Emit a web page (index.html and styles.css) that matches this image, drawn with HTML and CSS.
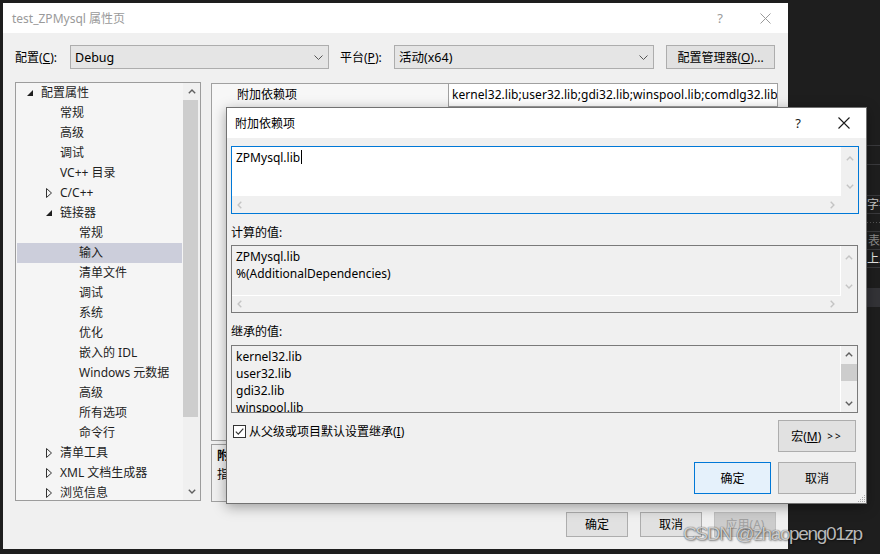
FILE: index.html
```html
<!DOCTYPE html>
<html lang="zh-CN">
<head>
<meta charset="utf-8">
<title>test_ZPMysql 属性页</title>
<link rel="stylesheet" href="styles.css">
</head>
<body>
<div class="editor-strip">
  <div class="es-gap1"></div>
  <div class="es-line"></div>
  <div class="es-gap2"></div>
  <div class="es-line"></div>
  <div class="es-gap3"></div>
  <div class="es-line"></div>
  <div class="es-text">字符</div>
  <div class="es-line"></div>
  <div class="es-dots"></div>
  <div class="es-line"></div>
  <div class="es-text dim">表</div>
  <div class="es-line"></div>
  <div class="es-text bright">上显</div>
  <div class="es-line"></div>
  <div class="es-gap4"></div>
  <div class="es-block"></div>
</div>

<div class="win-main">
  <div class="titlebar">
    <span class="title">test_ZPMysql 属性页</span>
    <span class="tb-help">?</span>
    <span class="tb-close"><svg width="11" height="11" viewBox="0 0 11 11"><path d="M0.5 0.5L10.5 10.5M10.5 0.5L0.5 10.5" stroke="#9a9a9a" stroke-width="1" fill="none"/></svg></span>
  </div>

  <div class="cfg-row">
    <span class="cfg-label lbl-cfg">配置(<u>C</u>):</span>
    <div class="combo combo-cfg"><span>Debug</span><svg width="9" height="5" viewBox="0 0 9 5"><path d="M0.5 0.5L4.5 4.5L8.5 0.5" stroke="#555" fill="none"/></svg></div>
    <span class="cfg-label lbl-plat">平台(<u>P</u>):</span>
    <div class="combo combo-plat"><span>活动(x64)</span><svg width="9" height="5" viewBox="0 0 9 5"><path d="M0.5 0.5L4.5 4.5L8.5 0.5" stroke="#555" fill="none"/></svg></div>
    <div class="btn btn-cfgmgr">配置管理器(<u>O</u>)...</div>
  </div>

  <div class="main-area">
    <div class="tree">
      <div class="tree-list">
        <div class="row l0"><span class="arrow"><svg width="6" height="6" viewBox="0 0 6 6"><polygon points="6,0 6,6 0,6" fill="#1e1e1e"/></svg></span>配置属性</div>
        <div class="row l1">常规</div>
        <div class="row l1">高级</div>
        <div class="row l1">调试</div>
        <div class="row l1">VC++ 目录</div>
        <div class="row l1 has-arrow"><span class="arrow"><svg width="6" height="10" viewBox="0 0 6 10"><polygon points="0.5,0.5 5.5,5 0.5,9.5" fill="none" stroke="#333"/></svg></span>C/C++</div>
        <div class="row l1 has-arrow"><span class="arrow"><svg width="6" height="6" viewBox="0 0 6 6"><polygon points="6,0 6,6 0,6" fill="#1e1e1e"/></svg></span>链接器</div>
        <div class="row l2">常规</div>
        <div class="row l2 selected">输入</div>
        <div class="row l2">清单文件</div>
        <div class="row l2">调试</div>
        <div class="row l2">系统</div>
        <div class="row l2">优化</div>
        <div class="row l2">嵌入的 IDL</div>
        <div class="row l2">Windows 元数据</div>
        <div class="row l2">高级</div>
        <div class="row l2">所有选项</div>
        <div class="row l2">命令行</div>
        <div class="row l1 has-arrow"><span class="arrow"><svg width="6" height="10" viewBox="0 0 6 10"><polygon points="0.5,0.5 5.5,5 0.5,9.5" fill="none" stroke="#333"/></svg></span>清单工具</div>
        <div class="row l1 has-arrow"><span class="arrow"><svg width="6" height="10" viewBox="0 0 6 10"><polygon points="0.5,0.5 5.5,5 0.5,9.5" fill="none" stroke="#333"/></svg></span>XML 文档生成器</div>
        <div class="row l1 has-arrow"><span class="arrow"><svg width="6" height="10" viewBox="0 0 6 10"><polygon points="0.5,0.5 5.5,5 0.5,9.5" fill="none" stroke="#333"/></svg></span>浏览信息</div>
      </div>
      <div class="vscroll tree-scroll">
        <div class="sb-btn"><svg width="8" height="5" viewBox="0 0 8 5"><path d="M0.8 4.3L4 1.1L7.2 4.3" stroke="#606060" stroke-width="1.4" fill="none"/></svg></div>
        <div class="sb-thumb tree-thumb"></div>
        <div class="sb-fill"></div>
        <div class="sb-btn"><svg width="8" height="5" viewBox="0 0 8 5"><path d="M0.8 0.7L4 3.9L7.2 0.7" stroke="#606060" stroke-width="1.4" fill="none"/></svg></div>
      </div>
    </div>

    <div class="right-pane">
      <div class="grid">
        <div class="grid-row">
          <span class="grid-name">附加依赖项</span>
          <span class="grid-value">kernel32.lib;user32.lib;gdi32.lib;winspool.lib;comdlg32.lib;advapi32.lib</span>
        </div>
      </div>
      <div class="desc">
        <div class="desc-title">附加依赖项</div>
        <div class="desc-text">指定要添加到链接命令行的附加项。</div>
      </div>
    </div>
  </div>

  <div class="footer">
    <div class="btn fbtn">确定</div>
    <div class="btn fbtn">取消</div>
    <div class="btn fbtn disabled">应用(<u>A</u>)</div>
  </div>
</div>

<div class="dialog">
  <div class="titlebar dlg-titlebar">
    <span class="title dlg-title">附加依赖项</span>
    <span class="tb-help dlg-help">?</span>
    <span class="tb-close dlg-close"><svg width="12" height="12" viewBox="0 0 12 12"><path d="M0.5 0.5L11.5 11.5M11.5 0.5L0.5 11.5" stroke="#1a1a1a" stroke-width="1.1" fill="none"/></svg></span>
  </div>
  <div class="dlg-body">
    <div class="editbox edit-active">
      <div class="eb-text white">ZPMysql.lib<span class="caret"></span></div>
      <div class="eb-vs">
        <svg width="8" height="5" viewBox="0 0 8 5"><path d="M0.8 4.3L4 1.1L7.2 4.3" stroke="#c4c4c4" stroke-width="1.4" fill="none"/></svg>
        <svg width="8" height="5" viewBox="0 0 8 5"><path d="M0.8 0.7L4 3.9L7.2 0.7" stroke="#c4c4c4" stroke-width="1.4" fill="none"/></svg>
      </div>
      <div class="eb-hs">
        <svg width="5" height="8" viewBox="0 0 5 8"><path d="M4.3 0.8L1.1 4L4.3 7.2" stroke="#c4c4c4" stroke-width="1.4" fill="none"/></svg>
        <svg width="5" height="8" viewBox="0 0 5 8"><path d="M0.7 0.8L3.9 4L0.7 7.2" stroke="#c4c4c4" stroke-width="1.4" fill="none"/></svg>
      </div>
      <div class="eb-corner"></div>
    </div>

    <div class="field-label">计算的值:</div>
    <div class="editbox edit-ro">
      <div class="eb-text ro">ZPMysql.lib<br>%(AdditionalDependencies)</div>
      <div class="eb-vs">
        <svg width="8" height="5" viewBox="0 0 8 5"><path d="M0.8 4.3L4 1.1L7.2 4.3" stroke="#c4c4c4" stroke-width="1.4" fill="none"/></svg>
        <svg width="8" height="5" viewBox="0 0 8 5"><path d="M0.8 0.7L4 3.9L7.2 0.7" stroke="#c4c4c4" stroke-width="1.4" fill="none"/></svg>
      </div>
      <div class="eb-hs">
        <svg width="5" height="8" viewBox="0 0 5 8"><path d="M4.3 0.8L1.1 4L4.3 7.2" stroke="#c4c4c4" stroke-width="1.4" fill="none"/></svg>
        <svg width="5" height="8" viewBox="0 0 5 8"><path d="M0.7 0.8L3.9 4L0.7 7.2" stroke="#c4c4c4" stroke-width="1.4" fill="none"/></svg>
      </div>
      <div class="eb-corner"></div>
    </div>

    <div class="field-label lbl2">继承的值:</div>
    <div class="listbox">
      <div class="lb-text">kernel32.lib<br>user32.lib<br>gdi32.lib<br>winspool.lib<br>comdlg32.lib<br>advapi32.lib</div>
      <div class="vscroll lb-scroll">
        <div class="sb-btn"><svg width="8" height="5" viewBox="0 0 8 5"><path d="M0.8 4.3L4 1.1L7.2 4.3" stroke="#606060" stroke-width="1.4" fill="none"/></svg></div>
        <div class="sb-thumb lb-thumb"></div>
        <div class="sb-fill"></div>
        <div class="sb-btn"><svg width="8" height="5" viewBox="0 0 8 5"><path d="M0.8 0.7L4 3.9L7.2 0.7" stroke="#606060" stroke-width="1.4" fill="none"/></svg></div>
      </div>
    </div>

    <div class="check-row">
      <div class="check">
        <span class="checkbox"><svg width="11" height="11" viewBox="0 0 11 11"><path d="M1.8 5.6L4.3 8.1L9.3 2.6" stroke="#333" stroke-width="1.2" fill="none"/></svg></span>
        <span class="check-label">从父级或项目默认设置继承(<u>I</u>)</span>
      </div>
      <div class="btn btn-macro">宏(<u>M</u>)<span class="gg">&gt;&gt;</span></div>
    </div>

    <div class="dlg-buttons">
      <div class="btn btn-ok">确定</div>
      <div class="btn btn-cancel">取消</div>
    </div>
  </div>
  <svg class="grip" width="9" height="9" viewBox="0 0 9 9">
    <g fill="#a8a8a8">
      <rect x="7" y="1" width="1" height="1"/>
      <rect x="5" y="3" width="1" height="1"/><rect x="7" y="3" width="1" height="1"/>
      <rect x="3" y="5" width="1" height="1"/><rect x="5" y="5" width="1" height="1"/><rect x="7" y="5" width="1" height="1"/>
      <rect x="1" y="7" width="1" height="1"/><rect x="3" y="7" width="1" height="1"/><rect x="5" y="7" width="1" height="1"/><rect x="7" y="7" width="1" height="1"/>
    </g>
  </svg>
</div>

<div class="watermark">CSDN @zhaopeng01zp</div>
</body>
</html>
```

FILE: styles.css
```css
* { box-sizing: border-box; }

body {
  margin: 0;
  width: 880px;
  height: 554px;
  overflow: hidden;
  position: relative;
  background: #1e1e1e;
  font-family: "Noto Sans", "Noto Sans CJK SC", sans-serif;
  font-size: 12px;
  line-height: 17px;
  color: #000;
}

u { text-decoration: underline; text-underline-offset: 1px; }

/* background editor strip on the right */
.editor-strip {
  position: absolute;
  left: 788px;
  top: 0;
  width: 92px;
  height: 554px;
  background: #1e1e1e;
  display: flex;
  flex-direction: column;
  overflow: hidden;
}
.es-gap1 { height: 145px; }
.es-gap2 { height: 18px; }
.es-gap3 { height: 30px; }
.es-gap4 { height: 20px; }
.es-line { height: 1px; background: #3a3a3d; }
.es-text {
  height: 17px;
  padding-left: 79px;
  color: #c8c8c8;
  font-size: 12px;
  line-height: 17px;
  white-space: nowrap;
}
.es-text.dim { color: #8a8a8a; padding-left: 80px; }
.es-text.bright { color: #e8e8e8; }
.es-dots {
  height: 17px;
  background-image: radial-gradient(circle, #555 0.6px, transparent 0.8px);
  background-size: 3px 3px;
  background-position: 0 7px;
  background-repeat: repeat-x;
}
.es-block { height: 19px; background: #333337; }

/* main property window */
.win-main {
  position: absolute;
  left: 3px;
  top: 3px;
  width: 785px;
  height: 546px;
  background: #f0f0f0;
  display: flex;
  flex-direction: column;
}

.titlebar {
  flex: none;
  height: 30px;
  background: #fff;
  display: flex;
  align-items: center;
}
.title {
  flex: 1;
  padding-left: 9px;
  color: #9a9a9a;
  white-space: nowrap;
}
.tb-help {
  width: 46px;
  height: 30px;
  display: flex;
  align-items: center;
  justify-content: center;
  color: #9a9a9a;
  font-size: 13px;
}
.tb-close {
  width: 45px;
  height: 30px;
  display: flex;
  align-items: center;
  justify-content: center;
}

.cfg-row {
  flex: none;
  height: 49px;
  padding: 12px 0 13px 12px;
  display: flex;
  align-items: center;
}
.cfg-label { white-space: nowrap; }
.lbl-cfg { width: 55px; }
.lbl-plat { width: 54px; margin-left: 11px; }
.combo {
  height: 24px;
  background: #e5e5e5;
  border: 1px solid #adadad;
  display: flex;
  align-items: center;
  justify-content: space-between;
  padding: 0 5px 0 4px;
}
.combo span { font-size: 12.5px; }
.combo-cfg { width: 259px; }
.combo-plat { width: 260px; }

.btn {
  background: #e1e1e1;
  border: 1px solid #adadad;
  display: flex;
  align-items: center;
  justify-content: center;
  white-space: nowrap;
}
.btn-cfgmgr { width: 109px; height: 24px; margin-left: 12px; }

.main-area {
  flex: none;
  height: 420px;
  padding-left: 12px;
  display: flex;
}

.tree {
  width: 186px;
  height: 419px;
  border: 1px solid #9c9c9c;
  display: flex;
  background: #f5f5f5;
}
.tree-list {
  width: 167px;
  padding: 0 1px;
  overflow: hidden;
}
.row {
  width: 165px;
  height: 20px;
  line-height: 20px;
  display: flex;
  align-items: center;
  white-space: nowrap;
  color: #1e1e1e;
}
.arrow {
  width: 14px;
  flex: none;
  display: flex;
  align-items: center;
}
.l0 { padding-left: 10px; }
.l1 { padding-left: 43px; }
.l1.has-arrow { padding-left: 29px; }
.l2 { padding-left: 62px; }
.selected { background: #cccedb; }

.vscroll {
  display: flex;
  flex-direction: column;
  background: #f0f0f0;
}
.tree-scroll { width: 17px; }
.sb-btn {
  flex: none;
  height: 17px;
  display: flex;
  align-items: center;
  justify-content: center;
}
.sb-thumb { flex: none; background: #cdcdcd; }
.tree-thumb { height: 317px; width: 15px; }
.sb-fill { flex: 1; }

.right-pane {
  width: 567px;
  margin-left: 10px;
  display: flex;
  flex-direction: column;
}
.grid {
  height: 358px;
  margin-top: 1px;
  border: 1px solid #a0a0a0;
  background: #f7f7f7;
  overflow: hidden;
}
.grid-row {
  display: flex;
  height: 23px;
}
.grid-name {
  width: 236px;
  padding-left: 25px;
  line-height: 21px;
  white-space: nowrap;
}
.grid-value {
  flex: 1;
  background: #fff;
  border-left: 1px solid #a0a0a0;
  border-bottom: 1px solid #a0a0a0;
  padding-left: 3px;
  line-height: 21px;
  white-space: nowrap;
  overflow: hidden;
  letter-spacing: 0.05px;
}
.desc {
  height: 58px;
  margin-top: 3px;
  border: 1px solid #a0a0a0;
  padding: 2px 5px;
  overflow: hidden;
}
.desc-title { font-weight: bold; line-height: 18px; }
.desc-text { line-height: 20px; }

.footer {
  flex: none;
  margin-top: 10px;
  padding-right: 12px;
  display: flex;
  justify-content: flex-end;
  gap: 12px;
}
.fbtn { width: 62px; height: 25px; }
.fbtn.disabled { background: #cccccc; border-color: #bfbfbf; color: #a0a0a0; }

/* modal dialog */
.dialog {
  position: absolute;
  left: 226px;
  top: 107px;
  width: 641px;
  height: 397px;
  background: #f0f0f0;
  border: 1px solid #727272;
  box-shadow: 0 3px 12px rgba(0, 0, 0, 0.35);
  display: flex;
  flex-direction: column;
}
.dlg-title { padding-left: 8px; color: #000; }
.dlg-help { color: #1a1a1a; font-size: 13px; }
.dlg-close { width: 45px; }

.dlg-body {
  flex: 1;
  padding: 8px 7px 0 4px;
  display: flex;
  flex-direction: column;
}

.editbox {
  flex: none;
  height: 68px;
  display: grid;
  grid-template-columns: 1fr 16px;
  grid-template-rows: 1fr 16px;
}
.edit-active {
  width: 628px;
  border: 1px solid #0078d7;
  grid-template-columns: 1fr 17px;
  grid-template-rows: 1fr 17px;
}
.edit-ro {
  width: 627px;
  border: 1px solid #7a7a7a;
  background: #f0f0f0;
}
.eb-text {
  padding: 2px 4px;
  white-space: nowrap;
  overflow: hidden;
}
.eb-text.white { background: #fff; }
.eb-text.ro {
  border-right: 1px solid #fff;
  border-bottom: 1px solid #fff;
}
.caret {
  display: inline-block;
  width: 1px;
  height: 14px;
  background: #000;
  vertical-align: -2px;
  margin-left: 1px;
}
.eb-vs {
  background: #f0f0f0;
  display: flex;
  flex-direction: column;
  align-items: center;
  justify-content: space-between;
  padding: 9px 0 7px;
}
.eb-hs {
  background: #f0f0f0;
  display: flex;
  align-items: center;
  justify-content: space-between;
  padding: 0 6px 0 5px;
}
.eb-corner { background: #f0f0f0; }

.field-label {
  flex: none;
  height: 31px;
  padding-top: 10px;
  white-space: nowrap;
}
.lbl2 { height: 32px; padding-top: 10px; }

.listbox {
  flex: none;
  width: 627px;
  height: 68px;
  border: 1px solid #7a7a7a;
  display: flex;
}
.lb-text {
  flex: 1;
  padding: 2px 4px;
  border-right: 1px solid #fff;
  overflow: hidden;
  white-space: nowrap;
}
.lb-scroll { width: 16px; }
.lb-thumb { height: 17px; margin-top: 1px; }

.check-row {
  flex: none;
  margin-top: 7px;
  height: 32px;
  display: flex;
  justify-content: space-between;
}
.check {
  display: flex;
  align-items: flex-start;
  padding-left: 2px;
}
.checkbox {
  margin-top: 5px;
  width: 13px;
  height: 13px;
  border: 1px solid #333;
  background: #fff;
  display: flex;
  align-items: center;
  justify-content: center;
}
.check-label {
  margin-left: 3px;
  margin-top: 3px;
  white-space: nowrap;
}
.btn-macro { width: 78px; height: 32px; margin-right: 3px; }
.gg { font-size: 10px; letter-spacing: 2px; margin-left: 6px; }

.dlg-buttons {
  flex: none;
  margin-top: 10px;
  display: flex;
  justify-content: flex-end;
  gap: 7px;
  padding-right: 3px;
}
.btn-ok {
  width: 77px;
  height: 32px;
  background: #e5f1fb;
  border-color: #0078d7;
}
.btn-cancel { width: 78px; height: 32px; }

.grip {
  position: absolute;
  right: 0;
  bottom: 0;
}

.watermark {
  position: absolute;
  left: 683px;
  top: 522px;
  font-family: "Liberation Sans", "DejaVu Sans", sans-serif;
  font-size: 19px;
  line-height: 24px;
  letter-spacing: -1.35px;
  color: rgba(255, 255, 255, 0.72);
  text-shadow: 0 0 1px rgba(0, 0, 0, 0.7), 1px 1px 2px rgba(0, 0, 0, 0.45);
  white-space: nowrap;
}
```
